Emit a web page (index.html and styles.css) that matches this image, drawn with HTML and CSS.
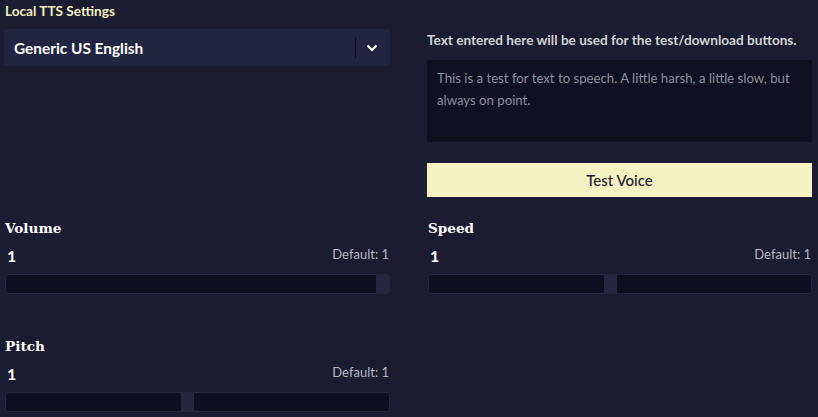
FILE: index.html
```html
<!DOCTYPE html>
<html>
<head>
<meta charset="utf-8">
<link rel="stylesheet" href="styles.css">
</head>
<body>
<div class="page">
  <div class="title">Local TTS Settings</div>
  <div class="grid">
    <div class="col">
      <div class="select">
        <span class="select-text">Generic US English</span>
        <span class="select-sep"></span>
        <svg class="chev" width="12" height="8" viewBox="0 0 12 8"><path d="M1.5 1.5 L6 6 L10.5 1.5" fill="none" stroke="#ffffff" stroke-width="2"/></svg>
      </div>
    </div>
    <div class="col">
      <div class="hint">Text entered here will be used for the test/download buttons.</div>
      <div class="textarea">This is a test for text to speech. A little harsh, a little slow, but always on point.</div>
      <div class="button">Test Voice</div>
    </div>

    <div class="slider">
      <div class="s-label">Volume</div>
      <div class="s-row"><span class="s-val">1</span><span class="s-def">Default: 1</span></div>
      <div class="track"><span class="fill" style="width:100%"></span><span class="thumb"></span></div>
    </div>
    <div class="slider">
      <div class="s-label">Speed</div>
      <div class="s-row"><span class="s-val">1</span><span class="s-def">Default: 1</span></div>
      <div class="track"><span class="fill" style="width:47.37%"></span><span class="thumb"></span></div>
    </div>
    <div class="slider pitch">
      <div class="s-label">Pitch</div>
      <div class="s-row"><span class="s-val">1</span><span class="s-def">Default: 1</span></div>
      <div class="track"><span class="fill" style="width:47.37%"></span><span class="thumb"></span></div>
    </div>
  </div>
</div>
</body>
</html>
```

FILE: styles.css
```css
html, body {
  margin: 0;
  padding: 0;
  background: #1b1c31;
}
body {
  width: 818px;
  height: 417px;
  overflow: hidden;
  font-family: "Lato", "Noto Sans", sans-serif;
}
.page {
  padding: 2px 6px 0 4px;
}
.title {
  color: #f2edbd;
  font-weight: 700;
  font-size: 13.6px;
  line-height: 18px;
  padding-left: 1px;
}
.grid {
  display: grid;
  grid-template-columns: 386px 385px;
  column-gap: 37px;
  margin-top: 9px;
}
.select {
  height: 37px;
  background: #222540;
  border-radius: 3px;
  display: flex;
  align-items: center;
  padding: 0 12px 0 10px;
  box-sizing: border-box;
}
.select-text {
  flex: 1;
  color: #ffffff;
  font-weight: 700;
  font-size: 15.4px;
}
.select-sep {
  width: 1px;
  height: 21px;
  background: #0d0e1c;
  margin-right: 10px;
}
.chev {
  display: block;
}
.hint {
  color: #cfd0d8;
  font-weight: 700;
  font-size: 13.6px;
  line-height: 16px;
  margin-top: 3px;
}
.textarea {
  margin-top: 12px;
  height: 82px;
  background: #0f1021;
  color: #8d8f9e;
  font-size: 13.2px;
  line-height: 22px;
  padding: 7px 10px;
  box-sizing: border-box;
}
.button {
  margin-top: 21px;
  height: 34px;
  background: #f5f2c2;
  color: #1b1c31;
  font-size: 15px;
  font-weight: 500;
  display: flex;
  align-items: center;
  justify-content: center;
}
.slider {
  margin-top: 21px;
}
.slider.pitch {
  margin-top: 42px;
}
.s-label {
  font-family: "DejaVu Serif", serif;
  font-weight: 700;
  font-size: 13.6px;
  line-height: 20px;
  color: #ffffff;
  padding-left: 1px;
}
.s-row {
  display: flex;
  justify-content: space-between;
  align-items: flex-start;
  margin-top: 8px;
  height: 28px;
}
.s-val {
  color: #ffffff;
  font-weight: 700;
  font-size: 16px;
  line-height: 20px;
  padding-left: 3px;
}
.s-def {
  color: #b5b6c0;
  font-size: 13px;
  line-height: 16px;
  padding-right: 1px;
}
.track {
  height: 20px;
  box-sizing: border-box;
  border: 1px solid #23263d;
  border-radius: 3px;
  background: #0e0f21;
  display: flex;
  padding-right: 13px;
  margin-left: 1px;
}
.fill {
  display: block;
  flex: none;
}
.thumb {
  display: block;
  width: 13px;
  height: 100%;
  background: #24273f;
  flex: none;
}
```
